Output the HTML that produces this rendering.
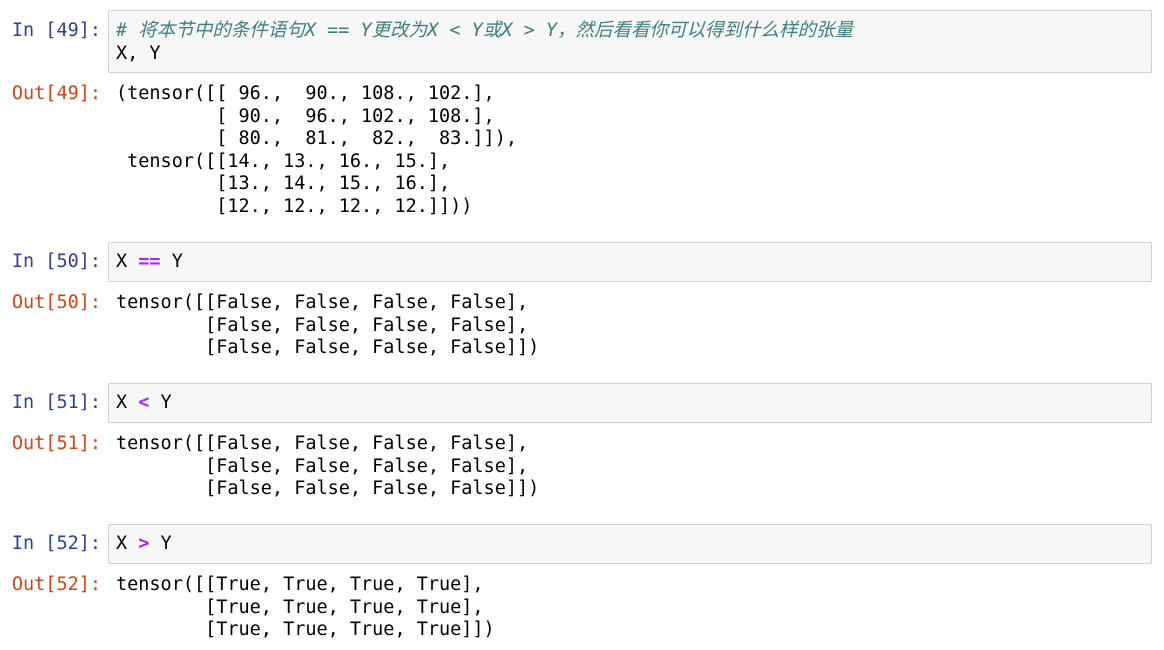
<!DOCTYPE html>
<html><head><meta charset="utf-8"><style>
body{margin:0;width:1164px;height:650px;background:#fff;position:relative;overflow:hidden;font-family:"DejaVu Sans Mono","Liberation Mono","Noto Sans CJK SC",monospace;font-size:18.5px;}
.p{position:absolute;left:0;width:101px;text-align:right;line-height:22.6px;white-space:pre;}
.in{color:#303F9F}.out{color:#D84315}
.box{position:absolute;left:108px;width:1044px;background:#f7f7f7;border:1px solid #cfcfcf;border-radius:2px;box-sizing:border-box;}
.t{position:absolute;left:116px;line-height:22.6px;white-space:pre;color:#000;}
.c{color:#408080;font-style:italic;font-family:"DejaVu Sans Mono","Noto Sans CJK SC",monospace;}
.o{color:#AA22FF;font-weight:bold}
</style></head><body>
<div class="box" style="top:10px;height:63px"></div>
<div class="p in" style="top:20px">In [49]:</div>
<div class="t" style="top:20px"><span class="c"># 将本节中的条件语句X == Y更改为X &lt; Y或X &gt; Y，然后看看你可以得到什么样的张量</span>
X, Y</div>
<div class="p out" style="top:83px">Out[49]:</div>
<div class="t" style="top:83px">(tensor([[ 96.,  90., 108., 102.],
         [ 90.,  96., 102., 108.],
         [ 80.,  81.,  82.,  83.]]),
 tensor([[14., 13., 16., 15.],
         [13., 14., 15., 16.],
         [12., 12., 12., 12.]]))</div>

<div class="box" style="top:242px;height:40px"></div>
<div class="p in" style="top:251px">In [50]:</div>
<div class="t" style="top:251px">X <span class="o">==</span> Y</div>
<div class="p out" style="top:292px">Out[50]:</div>
<div class="t" style="top:292px">tensor([[False, False, False, False],
        [False, False, False, False],
        [False, False, False, False]])</div>

<div class="box" style="top:383px;height:40px"></div>
<div class="p in" style="top:392px">In [51]:</div>
<div class="t" style="top:392px">X <span class="o">&lt;</span> Y</div>
<div class="p out" style="top:433px">Out[51]:</div>
<div class="t" style="top:433px">tensor([[False, False, False, False],
        [False, False, False, False],
        [False, False, False, False]])</div>

<div class="box" style="top:524px;height:40px"></div>
<div class="p in" style="top:533px">In [52]:</div>
<div class="t" style="top:533px">X <span class="o">&gt;</span> Y</div>
<div class="p out" style="top:574px">Out[52]:</div>
<div class="t" style="top:574px">tensor([[True, True, True, True],
        [True, True, True, True],
        [True, True, True, True]])</div>
</body></html>
